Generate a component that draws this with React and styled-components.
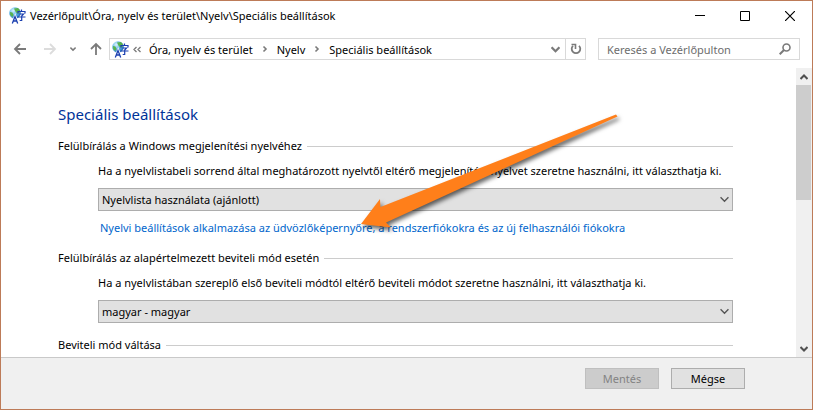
import React from "react";
import styled, { createGlobalStyle } from "styled-components";

const sections = [
  {
    id: "display",
    title: "Felülbírálás a Windows megjelenítési nyelvéhez",
    hint: "Ha a nyelvlistabeli sorrend által meghatározott nyelvtől eltérő megjelenítési nyelvet szeretne használni, itt választhatja ki.",
    value: "Nyelvlista használata (ajánlott)",
    link: "Nyelvi beállítások alkalmazása az üdvözlőképernyőre, a rendszerfiókokra és az új felhasználói fiókokra",
  },
  {
    id: "input",
    title: "Felülbírálás az alapértelmezett beviteli mód esetén",
    hint: "Ha a nyelvlistában szereplő első beviteli módtól eltérő beviteli módot szeretne használni, itt választhatja ki.",
    value: "magyar - magyar",
  },
  { id: "switch", title: "Beviteli mód váltása" },
];

const LanguageIcon = () => (
  <svg width="17" height="17" viewBox="0 0 17 17" aria-hidden="true">
    <defs>
      <radialGradient id="globe" cx="0.35" cy="0.3" r="0.8">
        <stop offset="0" stopColor="#d9f3ff" />
        <stop offset="0.5" stopColor="#5cb2e6" />
        <stop offset="1" stopColor="#1c63b4" />
      </radialGradient>
    </defs>
    <circle cx="6" cy="6" r="5.8" fill="url(#globe)" />
    <path d="M5 1.500l4-.6 2 2.400-.6 2.600-2.200.6-1.800-2zM1 5l2.400.6L4.600 8 3.200 10 1.200 8z" fill="#58b24c" />
    <path d="M3.500 16.500L6.200 9.500L9 16.500" fill="none" stroke="#fff" strokeWidth="2.500" />
    <path d="M3.300 16.500L6 9.500L8.700 16.500M4.300 14h3.500" fill="none" stroke="#1b3fb0" strokeWidth="1.300" />
    <path
      d="M12.500 2.500v2M9 6.500v-2h7v2M10.500 7h4L12.700 9v4.500h-2M8.500 10h8"
      fill="none"
      stroke="#1b3fb0"
      strokeWidth="1.200"
    />
  </svg>
);

const Chevron = ({ dir = "down", size = 8, weight = 2 }) => {
  const d = {
    down: "M0.500 2L4 5.500L7.500 2",
    up: "M0.500 6L4 2.500L7.500 6",
    right: "M2.500 1.500L5 4L2.500 6.500",
  }[dir];
  return (
    <svg width={size} height={size} viewBox="0 0 8 8" aria-hidden="true">
      <path d={d} fill="none" stroke="currentColor" strokeWidth={weight} />
    </svg>
  );
};

const Arrow = ({ turn = 0 }) => (
  <svg width="14" height="14" viewBox="0 0 14 14" aria-hidden="true">
    <path
      d="M13 7H2M7 2L2 7l5 5"
      transform={`rotate(${turn} 7 7)`}
      fill="none"
      stroke="currentColor"
      strokeWidth="1.800"
    />
  </svg>
);

const Pointer = () => (
  <PointerLayer aria-hidden="true">
    <path d="M361 224L380 199L380.500 207L616 114.500L617.500 116.500L386 222.500L391 227.500Z" />
  </PointerLayer>
);

const App = () => {
  return (
    <>
      <GlobalStyle />
      <Window>
        <TitleBar>
          <LanguageIcon />
          <Title>Vezérlőpult\Óra, nyelv és terület\Nyelv\Speciális beállítások</Title>
          <WindowButton aria-label="Kis méret">
            <svg width="10" height="10">
              <path d="M0 4.500h10" stroke="#000" />
            </svg>
          </WindowButton>
          <WindowButton aria-label="Teljes méret">
            <svg width="10" height="10">
              <path d="M0.500 0.500h9v9h-9z" fill="none" stroke="#000" />
            </svg>
          </WindowButton>
          <WindowButton aria-label="Bezárás">
            <svg width="10" height="10">
              <path d="M0 0l10 10M10 0L0 10" stroke="#000" strokeWidth="1.200" />
            </svg>
          </WindowButton>
        </TitleBar>
        <Toolbar>
          <History>
            <NavButton aria-label="Vissza">
              <Arrow />
            </NavButton>
            <NavButton aria-label="Előre" disabled>
              <Arrow turn={180} />
            </NavButton>
            <NavButton aria-label="Előzmények" $small>
              <Chevron size={6} />
            </NavButton>
            <NavButton aria-label="Fel">
              <Arrow turn={90} />
            </NavButton>
          </History>
          <AddressBar aria-label="Cím">
            <LanguageIcon />
            <Overflow aria-label="További helyek">
              <svg width="8" height="7" viewBox="0 0 8 7">
                <path
                  d="M3.500 1l-2.500 2.500 2.500 2.500M7.500 1l-2.500 2.500 2.500 2.500"
                  fill="none"
                  stroke="currentColor"
                  strokeWidth="1.300"
                />
              </svg>
            </Overflow>
            <Crumb href="#region">Óra, nyelv és terület</Crumb>
            <Chevron dir="right" weight={1.6} />
            <Crumb href="#language">Nyelv</Crumb>
            <Chevron dir="right" weight={1.6} />
            <Crumb href="#advanced">Speciális beállítások</Crumb>
            <AddressButton aria-label="Korábbi helyek">
              <Chevron size={9} />
            </AddressButton>
            <AddressButton aria-label="Frissítés" $divided>
              <svg width="12" height="12" viewBox="0 0 12 12">
                <path d="M9 2.800A4.300 4.300 0 1 1 3 2.800" fill="none" stroke="currentColor" strokeWidth="1.800" />
                <path d="M1.500 1.500h4V6" fill="none" stroke="currentColor" strokeWidth="1.600" />
              </svg>
            </AddressButton>
          </AddressBar>
          <Search>
            <input type="search" aria-label="Keresés" placeholder="Keresés a Vezérlőpulton" />
            <svg width="12" height="12" viewBox="0 0 12 12" aria-hidden="true">
              <circle cx="7.500" cy="4.500" r="3.500" fill="none" stroke="currentColor" strokeWidth="1.600" />
              <path d="M5 7L0.700 11.300" stroke="currentColor" strokeWidth="2" />
            </svg>
          </Search>
        </Toolbar>
        <Body>
          <Content>
            <h1>Speciális beállítások</h1>
            {sections.map((section) => (
              <Section key={section.id}>
                <h2>{section.title}</h2>
                {section.value && (
                  <Options>
                    <label htmlFor={section.id}>{section.hint}</label>
                    <Dropdown>
                      <select id={section.id}>
                        <option>{section.value}</option>
                      </select>
                      <Chevron size={9} weight={1.2} />
                    </Dropdown>
                    {section.link && <a href="#welcome">{section.link}</a>}
                  </Options>
                )}
              </Section>
            ))}
          </Content>
          <Scrollbar>
            <ScrollButton aria-label="Görgetés fel">
              <Chevron dir="up" />
            </ScrollButton>
            <Track>
              <Thumb />
            </Track>
            <ScrollButton aria-label="Görgetés le">
              <Chevron />
            </ScrollButton>
          </Scrollbar>
        </Body>
        <Footer>
          <Button disabled>Mentés</Button>
          <Button>Mégse</Button>
        </Footer>
        <Pointer />
      </Window>
    </>
  );
};

const GlobalStyle = createGlobalStyle`
  * {
    box-sizing: border-box;
  }
  body {
    margin: 0;
    background: #fff;
  }
  body, button, input, select {
    font-family: "Noto Sans", "Open Sans", sans-serif;
    font-size: 11px;
    color: #000;
  }
  button {
    padding: 0;
    border: 0;
    background: none;
  }
  svg {
    display: block;
    flex-shrink: 0;
  }
`;

const Window = styled.div`
  position: relative;
  display: flex;
  flex-direction: column;
  height: 100vh;
  border: 1px solid #bd7b58;
`;

const TitleBar = styled.header`
  display: flex;
  align-items: center;
  height: 29px;
  padding-left: 8px;
`;

const Title = styled.div`
  flex: 1;
  padding-left: 4px;
  white-space: nowrap;
`;

const WindowButton = styled.button`
  display: grid;
  place-items: center;
  width: 45px;
  height: 28px;
`;

const Toolbar = styled.div`
  display: flex;
  align-items: center;
  padding: 8px 12px 8px 8px;
  height: 38px;
`;

const History = styled.div`
  display: flex;
  align-items: center;
  gap: 8px;
  margin-right: 2px;
`;

const NavButton = styled.button`
  display: grid;
  place-items: center;
  width: ${(props) => (props.$small ? "8px" : "22px")};
  height: 22px;
  color: #7a7a7a;
  &:disabled {
    color: #dcdcdc;
  }
`;

const AddressBar = styled.nav`
  flex: 1;
  display: flex;
  align-items: center;
  height: 22px;
  padding-left: 2px;
  border: 1px solid #d9d9d9;
  color: #7a7a7a;
  white-space: nowrap;
`;

const Overflow = styled.button`
  padding: 0 8px 0 4px;
  color: #7a7a7a;
`;

const Crumb = styled.a`
  padding-right: 8px;
  color: #000;
  text-decoration: none;
  svg + & {
    padding-left: 8px;
  }
`;

const AddressButton = styled.button`
  display: grid;
  place-items: center;
  width: 20px;
  height: 20px;
  color: #7a7a7a;
  border-left: ${(props) => (props.$divided ? "1px solid #d9d9d9" : "0")};
  a + & {
    margin-left: auto;
  }
`;

const Search = styled.div`
  display: flex;
  align-items: center;
  width: 202px;
  height: 22px;
  margin-left: 12px;
  padding: 0 8px;
  border: 1px solid #d9d9d9;
  color: #7a7a7a;
  input {
    flex: 1;
    min-width: 0;
    padding: 0;
    border: 0;
    outline: 0;
    background: none;
  }
  input::placeholder {
    color: #6d6d6d;
  }
`;

const Body = styled.div`
  flex: 1;
  min-height: 0;
  display: flex;
`;

const Content = styled.main`
  flex: 1;
  min-width: 0;
  overflow: hidden;
  padding: 34px 63px 0 57px;
  h1 {
    margin: 0 0 12px;
    font-size: 15px;
    line-height: 24px;
    font-weight: 400;
    color: #003399;
  }
`;

const Section = styled.section`
  margin-bottom: 14px;
  h2 {
    display: flex;
    align-items: center;
    gap: 5px;
    margin: 0;
    font-size: 11px;
    line-height: 16px;
    font-weight: 400;
    white-space: nowrap;
  }
  h2::after {
    content: "";
    flex: 1;
    height: 1px;
    background: #cccccc;
  }
`;

const Options = styled.div`
  display: flex;
  flex-direction: column;
  align-items: flex-start;
  gap: 9px;
  padding: 9px 0 0 40px;
  line-height: 16px;
  white-space: nowrap;
  a {
    padding-left: 2px;
    color: #0066cc;
    text-decoration: none;
  }
`;

const Dropdown = styled.div`
  align-self: stretch;
  display: grid;
  align-items: center;
  select,
  svg {
    grid-area: 1 / 1;
  }
  select {
    appearance: none;
    width: 100%;
    height: 23px;
    padding: 0 20px 0 3px;
    border: 1px solid #adadad;
    border-radius: 0;
    background: #e1e1e1;
  }
  svg {
    justify-self: end;
    margin-right: 4px;
    color: #555;
    pointer-events: none;
  }
`;

const Scrollbar = styled.div`
  display: flex;
  flex-direction: column;
  width: 16px;
  background: #f0f0f0;
`;

const ScrollButton = styled.button`
  display: grid;
  place-items: center;
  height: 17px;
  color: #505050;
`;

const Track = styled.div`
  flex: 1;
  padding-right: 1px;
`;

const Thumb = styled.div`
  height: 45%;
  background: #cdcdcd;
`;

const Footer = styled.footer`
  display: flex;
  justify-content: flex-end;
  gap: 12px;
  padding: 10px 67px 20px;
  border-top: 1px solid #c9c9c9;
  background: #f0f0f0;
`;

const Button = styled.button`
  width: 74px;
  height: 21px;
  border: 1px solid #adadad;
  background: #e1e1e1;
  &:disabled {
    border-color: #bfbfbf;
    background: #cccccc;
    color: #838383;
  }
`;

// spans the whole window, drawn over the form
const PointerLayer = styled.svg`
  position: absolute;
  inset: -1px;
  width: calc(100% + 2px);
  height: calc(100% + 2px);
  pointer-events: none;
  fill: #ff7f1a;
  filter: drop-shadow(2px 3px 2px rgba(0, 0, 0, 0.6));
`;

export default App;
